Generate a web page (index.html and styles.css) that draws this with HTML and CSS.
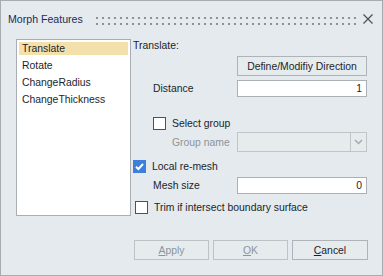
FILE: index.html
```html
<!DOCTYPE html>
<html lang="en">
<head>
  <meta charset="UTF-8">
  <title>Morph Features</title>
  <link rel="stylesheet" href="styles.css">
</head>
<body>
  <div class="dialog">
    <div class="titlebar">
      <span class="title">Morph Features</span>
      <svg class="grip" width="260" height="8" viewBox="0 0 260 8">
        <defs>
          <pattern id="dots" width="6" height="6" patternUnits="userSpaceOnUse">
            <rect x="0" y="0" width="2" height="2" fill="#8d9194"></rect>
          </pattern>
        </defs>
        <rect x="0" y="0" width="260" height="8" fill="url(#dots)"></rect>
      </svg>
      <svg class="close" width="10" height="10" viewBox="0 0 10 10">
        <path d="M0.5 0.5 L9.5 9.5 M9.5 0.5 L0.5 9.5" stroke="#4a4f55" stroke-width="1.2" fill="none"></path>
      </svg>
    </div>

    <div class="main">
      <div class="listbox">
        <div class="item selected">Translate</div>
        <div class="item">Rotate</div>
        <div class="item">ChangeRadius</div>
        <div class="item">ChangeThickness</div>
      </div>

      <div class="panel">
        <div class="heading">Translate:</div>

        <div class="row row-button">
          <button class="btn field">Define/Modifiy Direction</button>
        </div>

        <div class="row row-input">
          <span class="label indent">Distance</span>
          <div class="input field">1</div>
        </div>

        <div class="row row-check sp-select">
          <span class="check indent"></span>
          <span class="check-label">Select group</span>
        </div>

        <div class="row row-combo">
          <span class="label disabled indent2">Group name</span>
          <div class="combo field">
            <div class="combo-text"></div>
            <div class="combo-arrow">
              <svg width="9" height="6" viewBox="0 0 9 6">
                <path d="M1 1 L4.5 4.5 L8 1" stroke="#a6abb0" stroke-width="1.5" fill="none"></path>
              </svg>
            </div>
          </div>
        </div>

        <div class="row row-check sp-local">
          <span class="check checked">
            <svg width="13" height="13" viewBox="0 0 13 13">
              <path d="M3 6.8 L5.4 9 L10 4" stroke="#fff" stroke-width="2" fill="none"></path>
            </svg>
          </span>
          <span class="check-label">Local re-mesh</span>
        </div>

        <div class="row row-input">
          <span class="label indent">Mesh size</span>
          <div class="input field">0</div>
        </div>

        <div class="row row-check sp-trim">
          <span class="check nudge"></span>
          <span class="check-label">Trim if intersect boundary surface</span>
        </div>
      </div>
    </div>

    <div class="footer">
      <button class="btn footer-btn disabled-btn"><u>A</u>pply</button>
      <button class="btn footer-btn disabled-btn"><u>O</u>K</button>
      <button class="btn footer-btn cancel"><u>C</u>ancel</button>
    </div>
  </div>
</body>
</html>
```

FILE: styles.css
```css
body {
  margin: 0;
  font-family: 'Liberation Sans', Arial, sans-serif;
  font-size: 10.4px;
  color: #1b1f2a;
}
.dialog {
  width: 383px;
  height: 276px;
  box-sizing: border-box;
  border: 1px solid #a6acb1;
  background-color: #e4eaee;
}
.titlebar {
  height: 36px;
  display: flex;
  align-items: center;
  padding-left: 7px;
}
.title {
  width: 88px;
  font-size: 10.6px;
  color: #1d2a55;
}
.grip {
  margin-top: 3px;
}
.close {
  margin-left: 7px;
  margin-top: -1px;
}
.main {
  display: flex;
  padding-left: 15px;
  margin-top: 2px;
}
.listbox {
  width: 115px;
  height: 177px;
  box-sizing: border-box;
  border: 1px solid #a9aeb3;
  background-color: #fff;
  padding: 2px;
}
.item {
  height: 13px;
  line-height: 13px;
  padding-left: 3px;
  margin-bottom: 4px;
}
.item.selected {
  background-color: #f4e0ab;
}
.panel {
  margin-left: 2px;
  width: 234px;
  display: flex;
  flex-direction: column;
}
.heading {
  height: 12px;
  line-height: 12px;
  margin-top: 1px;
}
.row {
  display: flex;
  align-items: center;
}
.field {
  margin-left: auto;
  width: 130px;
  box-sizing: border-box;
}
.row-button {
  height: 20px;
  margin-top: 4px;
}
.row-input {
  height: 17px;
  margin-top: 4px;
}
.row-combo {
  height: 20px;
  margin-top: 2px;
}
.row-check {
  height: 13px;
}
.sp-select {
  margin-top: 20px;
}
.sp-local {
  margin-top: 8px;
}
.sp-trim {
  margin-top: 7px;
}
.indent {
  margin-left: 20px;
}
.indent2 {
  margin-left: 39px;
}
.label.disabled {
  color: #8d9499;
}
.btn {
  font-family: inherit;
  font-size: 10.4px;
  color: #1b1f2a;
  height: 20px;
  padding: 0;
  border: 1px solid #adb3b8;
  background-color: #e6ebee;
}
.input {
  height: 17px;
  border: 1px solid #abb0b5;
  background-color: #fff;
  text-align: right;
  padding-right: 4px;
  line-height: 15px;
}
.combo {
  height: 20px;
  display: flex;
}
.combo-text {
  flex: 1;
  border: 1px solid #c0c5c9;
  background-color: #e6ebee;
}
.combo-arrow {
  width: 15px;
  border: 1px solid #c0c5c9;
  border-left: none;
  background-color: #e6ebee;
  display: flex;
  align-items: center;
  justify-content: center;
}
.check {
  width: 13px;
  height: 13px;
  box-sizing: border-box;
  border: 1px solid #4d5257;
  background-color: #fff;
  display: inline-block;
}
.check.checked {
  border: none;
  background-color: #3f7fdc;
}
.check.checked svg {
  display: block;
}
.check.nudge {
  margin-left: 2px;
}
.check-label {
  margin-left: 6px;
}
.footer {
  display: flex;
  justify-content: flex-end;
  gap: 4px;
  padding-right: 14px;
  margin-top: 24px;
}
.footer-btn {
  width: 75px;
}
.footer-btn.cancel {
  width: 76px;
}
.disabled-btn {
  color: #8d9499;
  border-color: #bcc2c6;
}
```
